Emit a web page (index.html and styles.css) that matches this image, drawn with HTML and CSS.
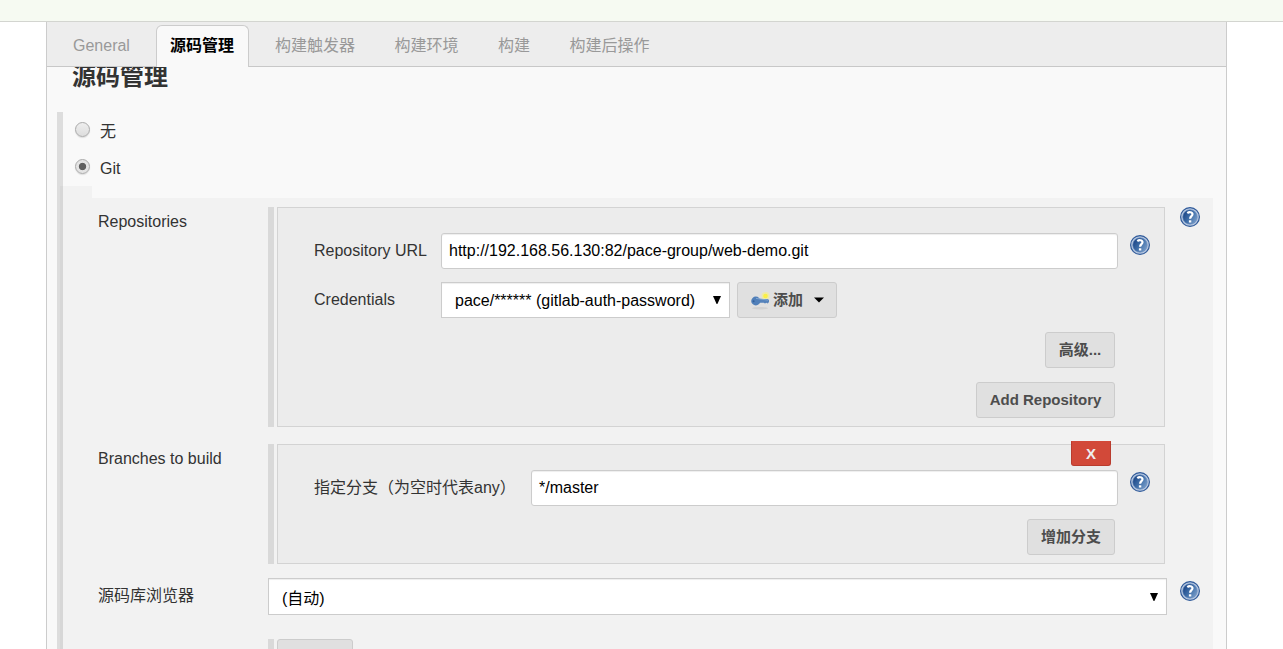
FILE: index.html
```html
<!DOCTYPE html>
<html lang="zh-CN">
<head>
<meta charset="utf-8">
<title>源码管理</title>
<link rel="stylesheet" href="styles.css">
</head>
<body>
<svg class="defs" width="0" height="0" aria-hidden="true">
  <defs>
    <linearGradient id="help-fill" x1="0" y1="0.2" x2="1" y2="0.8">
      <stop offset="0" stop-color="#174183"/><stop offset="0.5" stop-color="#406fa9"/><stop offset="1" stop-color="#7b9fca"/>
    </linearGradient>
    <symbol id="help" viewBox="0 0 20 20">
      <circle cx="10" cy="10" r="9.4" fill="#b9cae2" stroke="#315b9a" stroke-width="1.2"/>
      <circle cx="10" cy="10" r="7.3" fill="url(#help-fill)" stroke="#6e8fbd" stroke-width="0.6"/>
      <path d="M7.3 6.1C8.7 5 12.4 4.5 12.5 7.3C12.5 9.2 10.2 9.2 10.1 11.7" fill="none" stroke="#fff" stroke-width="2.2"/>
      <rect x="8.9" y="13.3" width="2.4" height="2.2" fill="#fff"/>
    </symbol>
  </defs>
</svg>
<div class="topbar"></div>
<main class="page">
  <nav class="tabs">
    <div class="tab">General</div>
    <div class="tab active">源码管理</div>
    <div class="tab trigger">构建触发器</div>
    <div class="tab">构建环境</div>
    <div class="tab">构建</div>
    <div class="tab">构建后操作</div>
  </nav>
  <h1 class="title"><span>源码管理</span></h1>
  <section class="scm">
    <div class="option"><i class="radio"></i><span class="option-name">无</span></div>
    <div class="option git"><i class="radio checked"></i><span class="option-name">Git</span></div>
    <div class="notch"></div>
    <div class="panel">
      <div class="row repos">
        <div class="label">Repositories</div>
        <div class="group">
          <div class="box">
            <div class="field">
              <span class="field-name">Repository URL</span>
              <div class="input">http://192.168.56.130:82/pace-group/web-demo.git</div>
              <svg class="help"><use href="#help"/></svg>
            </div>
            <div class="field credentials">
              <span class="field-name">Credentials</span>
              <div class="select cred-select"><span>pace/****** (gitlab-auth-password)</span><svg class="arrow" viewBox="0 0 8 8"><path d="M0 0H8L4.4 8H3.6Z"/></svg></div>
              <div class="button add">
                <svg class="key" viewBox="0 0 20 18">
                  <ellipse cx="10" cy="16.2" rx="8" ry="1.3" fill="#d1d1d1"/>
                  <circle cx="15.5" cy="4" r="4" fill="#f8ef8c" opacity=".65"/>
                  <circle cx="15.5" cy="4" r="2.3" fill="#faf047"/>
                  <path d="M8 7H18L19 8.2V10L17.7 11.6L16.4 10.8L15 11.6L13.7 10.8H8Z" fill="#5683bb"/>
                  <ellipse cx="5.8" cy="9" rx="4.6" ry="4.4" fill="#507fb9"/>
                  <path d="M6 6.4L18 8.1" stroke="#82a7d1"/>
                  <circle cx="3.6" cy="9.3" r="1" fill="#315f99"/>
                </svg>
                <span>添加</span>
                <svg class="caret" viewBox="0 0 10 6"><path d="M0 0.5H10L5 5.5Z"/></svg>
              </div>
            </div>
            <div class="button advanced">高级...</div>
            <div class="button add-repo">Add Repository</div>
          </div>
        </div>
        <svg class="help"><use href="#help"/></svg>
      </div>
      <div class="row branches">
        <div class="label">Branches to build</div>
        <div class="group">
          <div class="box">
            <div class="delete">X</div>
            <div class="field branch">
              <span class="field-name">指定分支（为空时代表any）</span>
              <div class="input">*/master</div>
              <svg class="help"><use href="#help"/></svg>
            </div>
            <div class="button add-branch">增加分支</div>
          </div>
        </div>
      </div>
      <div class="row browser">
        <div class="label">源码库浏览器</div>
        <div class="select"><span>(自动)</span><svg class="arrow" viewBox="0 0 8 8"><path d="M0 0H8L4.4 8H3.6Z"/></svg></div>
        <svg class="help"><use href="#help"/></svg>
      </div>
      <div class="row more">
        <div></div>
        <div class="group"><div class="button blank"></div></div>
      </div>
    </div>
  </section>
</main>
</body>
</html>
```
FILE: styles.css
```css
* { box-sizing: border-box; }
body {
  margin: 0;
  height: 649px;
  overflow: hidden;
  background: #fff;
  color: #333;
  font: 16px/20px "Liberation Sans", "Noto Sans CJK SC", sans-serif;
}
.defs { position: absolute; }
.topbar { height: 22px; background: #f6faf2; border-bottom: 1px solid #d3d5d0; }
.page {
  width: 1181px;
  height: 627px;
  margin-left: 46px;
  overflow: hidden;
  background: #f9f9f9;
  border: solid #ccc;
  border-width: 0 1px;
}
.tabs {
  display: flex;
  height: 45px;
  padding: 3px 0 0 13px;
  background: #ededed;
  border-bottom: 1px solid #c8c8c8;
  color: #999;
}
.tab { height: 42px; padding: 11px 26px 0 13px; white-space: nowrap; }
.tab + .tab { padding-left: 13.5px; }
.tab.active {
  width: 93px;
  padding: 10px 0 0 13px;
  background: #f9f9f9;
  border: 1px solid #ccc;
  border-bottom: 0;
  border-radius: 6px 6px 0 0;
  color: #000;
  font-weight: bold;
}
.tab.trigger { padding-left: 26px; }
.title {
  height: 45px;
  margin: 0;
  padding-left: 25px;
  overflow: hidden;
  font-size: 24px;
  line-height: 24px;
}
.title span { display: block; margin-top: -2px; }
.scm { height: 537px; margin-left: 10px; border-left: 6px solid #ddd; }
.option { display: flex; height: 37px; padding: 10px 0 0 12px; }
.radio {
  width: 15px;
  height: 15px;
  margin: 0 10px 0 0;
  border: 1px solid #aaa;
  border-radius: 50%;
  background: linear-gradient(#eee, #ddd);
  box-shadow: 0 1px 1px #ddd;
}
.radio.checked { background: radial-gradient(circle, #606060 3.3px, #e4e4e4 4.1px); }
.notch { width: 32px; height: 12px; margin-left: -3px; background: #f2f2f2; border-left: 3px solid #d7d7d7; }
.panel {
  width: 1153px;
  height: 451px;
  margin-left: -3px;
  padding: 9px 0 0 35px;
  border-left: 3px solid #d7d7d7;
  background: #f2f2f2;
}
.row { display: grid; grid-template-columns: 170px 899px 20px; align-items: start; }
.row > .help { margin-left: 13px; }
.label { padding-top: 5px; }
.group { display: flex; width: 897px; height: 100%; padding-left: 3px; border-left: 6px solid #d9d9d9; }
.box { width: 888px; height: 100%; padding: 25px 0 0 36px; border: 1px solid #d3d3d3; background: #ececec; }
.repos { height: 220px; }
.branches { height: 120px; margin-top: 17px; }
.browser { height: 37px; margin-top: 14px; }
.more { height: 40px; margin-top: 24px; }
.help { display: block; width: 20px; height: 20px; flex: none; }
.field { display: grid; grid-template-columns: 127px 677px 20px; column-gap: 0; height: 36px; }
.field-name { padding-top: 8px; white-space: nowrap; }
.field .help { margin: 2px 0 0 12px; }
.input, .select {
  height: 36px;
  border: 1px solid #ccc;
  background: #fff;
  box-shadow: inset 0 1px 1px #eee;
  color: #000;
  white-space: nowrap;
}
.input { padding: 7px; border-radius: 3px; }
.select { display: flex; justify-content: space-between; padding: 8px 8px 0 13px; }
.credentials { grid-template-columns: 127px 289px 100px; column-gap: 0; margin-top: 13px; }
.arrow { width: 8px; height: 8px; margin-top: 5px; }
.button {
  display: flex;
  align-items: center;
  justify-content: center;
  height: 36px;
  border: 1px solid #ccc;
  border-radius: 3px;
  background: #e0e0e0;
  color: #4d4d4d;
  font-size: 15px;
  font-weight: bold;
  white-space: nowrap;
}
.button.add { width: 100px; margin-left: 7px; }
.key { width: 20px; height: 18px; margin: 2px 3px 0 0; }
.caret { width: 10px; height: 6px; margin-left: 11px; fill: #000; }
.advanced { width: 70px; margin: 14px 0 0 731px; }
.add-repo { width: 139px; margin: 14px 0 0 662px; }
.delete {
  width: 40px;
  height: 25px;
  margin: -29px 0 4px 757px;
  border: 1px solid #b93c2e;
  border-top-color: #d24939;
  border-radius: 0 0 3px 3px;
  background: #d24939;
  color: #eee;
  font: bold 15px/24px "Liberation Sans", sans-serif;
  text-align: center;
}
.branch { grid-template-columns: 217px 587px 20px; }
.add-branch { width: 88px; margin: 13px 0 0 713px; }
.browser .label { padding-top: 8px; }
.browser .select { height: 37px; padding-top: 10px; }
.browser .arrow { margin-top: 4px; }
.browser .help { margin-top: 3px; }
.blank { width: 76px; }
```
